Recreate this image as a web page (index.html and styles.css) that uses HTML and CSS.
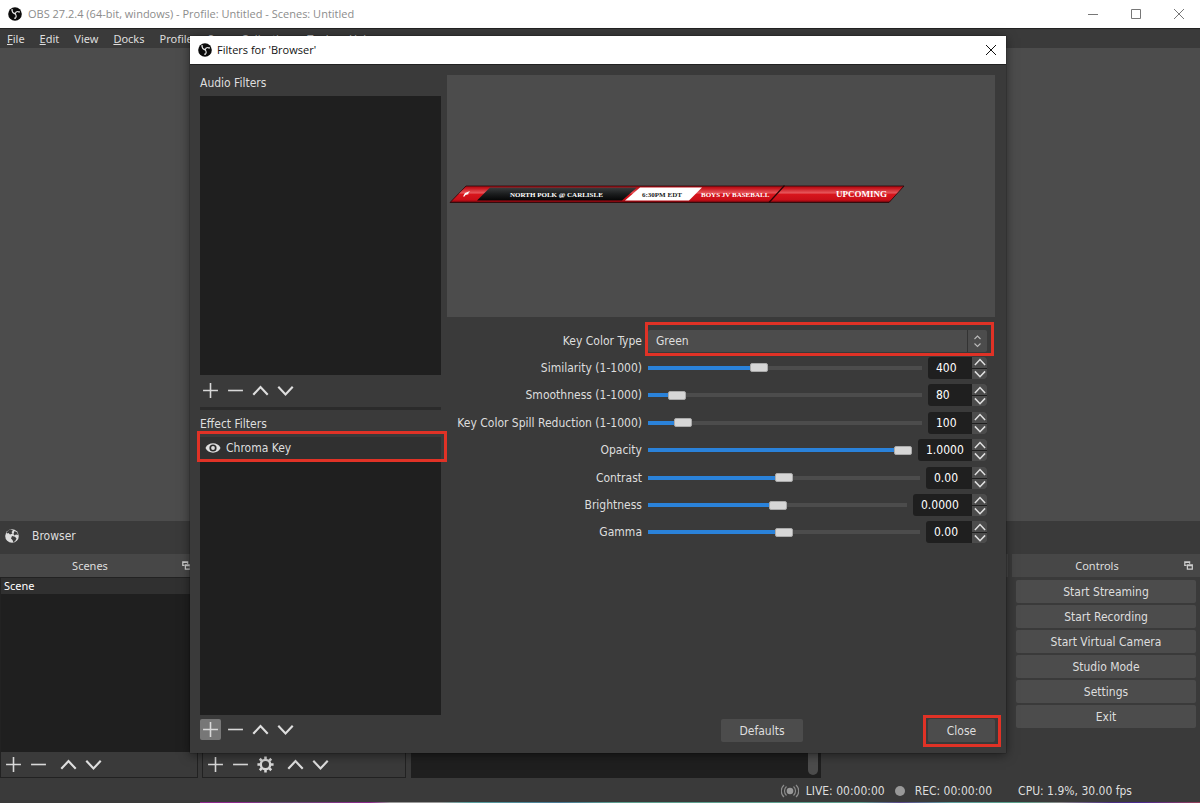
FILE: index.html
```html
<!DOCTYPE html>
<html lang="en">
<head>
<meta charset="utf-8">
<title>OBS 27.2.4 - Filters for 'Browser'</title>
<link rel="stylesheet" href="styles.css">
</head>
<body>
<svg width="0" height="0" class="defs" aria-hidden="true">
  <symbol id="obs" viewBox="0 0 16 16">
    <circle cx="8" cy="8" r="7.800" fill="#0c0c0c"/>
    <g fill="none" stroke="#e8e8e8" stroke-width="1.300" stroke-linecap="round">
      <path d="M4.800 3.200C4.600 5.400 6 7.200 8 7.600"/>
      <path d="M12.800 5.400C10.800 4.800 8.800 5.800 8 7.600"/>
      <path d="M8.200 13C9.600 11.600 9.400 9.200 8 7.600"/>
    </g>
    <g fill="#b5b5b5"><circle cx="4.600" cy="3.400" r="1"/><circle cx="12.600" cy="5.600" r="1"/><circle cx="8" cy="12.800" r="1"/></g>
  </symbol>
  <symbol id="plus" viewBox="0 0 16 16"><path d="M8 1v14M1 8h14" fill="none" stroke="#d8d8d8" stroke-width="1.500"/></symbol>
  <symbol id="minus" viewBox="0 0 16 16"><path d="M1 8h14" fill="none" stroke="#d8d8d8" stroke-width="1.500"/></symbol>
  <symbol id="up" viewBox="0 0 16 16"><path d="M1.200 12 8 4.800 14.800 12" fill="none" stroke="#dedede" stroke-width="2"/></symbol>
  <symbol id="down" viewBox="0 0 16 16"><path d="M1.200 4.500 8 11.700 14.800 4.500" fill="none" stroke="#dedede" stroke-width="2"/></symbol>
  <symbol id="gear" viewBox="0 0 16 16">
    <circle cx="8" cy="8" r="4.400" fill="none" stroke="#d8d8d8" stroke-width="2.200"/>
    <path d="M8 .4v3M8 12.600v3M.4 8h3M12.600 8h3M2.600 2.600l2.200 2.200M11.200 11.200l2.200 2.200M2.600 13.400l2.200-2.200M11.200 4.800l2.200-2.200" stroke="#d8d8d8" stroke-width="2.400"/>
  </symbol>
  <symbol id="popout" viewBox="0 0 8 8"><path d="M5 2.500V.8H.7v3h1.500M.7 1.300H5M3 3.500h4.400v3.700H3zM3 4.200h4.400" fill="none" stroke="#ccc" stroke-width="1.100"/></symbol>
  <symbol id="close" viewBox="0 0 12 12"><path d="M1 1l10 10M11 1 1 11" fill="none" stroke="currentColor"/></symbol>
</svg>

<div class="app">
  <header class="titlebar">
    <svg class="logo"><use href="#obs"/></svg>
    <span class="titlebar-text">OBS 27.2.4 (64-bit, windows) - Profile: Untitled - Scenes: Untitled</span>
    <button class="win-btn" aria-label="Minimize"><svg viewBox="0 0 12 12"><path d="M1 6.500h10" stroke="currentColor"/></svg></button>
    <button class="win-btn" aria-label="Maximize"><svg viewBox="0 0 12 12"><path d="M1.500 1.500h9v9h-9z" fill="none" stroke="currentColor"/></svg></button>
    <button class="win-btn" aria-label="Close window"><svg><use href="#close"/></svg></button>
  </header>

  <nav class="menubar">
    <a href="#"><u>F</u>ile</a><a href="#"><u>E</u>dit</a><a href="#">View</a><a href="#"><u>D</u>ocks</a><a href="#">Profile</a><a href="#">Scene Collection</a><a href="#">Tools</a><a href="#">Help</a>
  </nav>

  <main class="stage"></main>

  <div class="source-bar">
    <svg class="globe" viewBox="0 0 14 14">
      <circle cx="7" cy="7" r="6.800" fill="#dcdcdc"/>
      <path d="M5.500.5 8 1.500 6.500 3 7.500 4.500 5 5.500 3.500 4 2 4.500 1.500 3.500 3.500 1.300zM9.500 2l2.700 1.500.8 2.500-2-.5-1.500 1L8.500 5zM7 7l3 .8 1.500 1.700-1 2L8.500 13.500 7.500 11 6 9.500z" fill="#3a3a3a"/>
    </svg>
    <span>Browser</span>
  </div>

  <div class="docks">
    <section class="dock dock-scenes">
      <h2 class="dock-title">Scenes<svg class="popout"><use href="#popout"/></svg></h2>
      <div class="dock-frame">
        <ul class="dock-list"><li>Scene</li></ul>
        <div class="toolbar">
          <button class="tool" aria-label="Add scene"><svg><use href="#plus"/></svg></button>
          <button class="tool" aria-label="Remove scene"><svg><use href="#minus"/></svg></button>
          <button class="tool tool-split" aria-label="Move scene up"><svg><use href="#up"/></svg></button>
          <button class="tool" aria-label="Move scene down"><svg><use href="#down"/></svg></button>
        </div>
      </div>
    </section>
    <section class="dock dock-sources">
      <div class="dock-title"></div>
      <div class="dock-frame">
        <div class="dock-list"></div>
        <div class="toolbar">
          <button class="tool" aria-label="Add source"><svg><use href="#plus"/></svg></button>
          <button class="tool" aria-label="Remove source"><svg><use href="#minus"/></svg></button>
          <button class="tool" aria-label="Source properties"><svg><use href="#gear"/></svg></button>
          <button class="tool tool-split" aria-label="Move source up"><svg><use href="#up"/></svg></button>
          <button class="tool" aria-label="Move source down"><svg><use href="#down"/></svg></button>
        </div>
      </div>
    </section>
    <section class="dock dock-mixer">
      <div class="dock-title"></div>
      <div class="mixer"><div class="mixer-thumb"></div></div>
    </section>
    <section class="dock dock-transitions"><div class="dock-title"></div></section>
    <section class="dock dock-controls">
      <h2 class="dock-title">Controls<svg class="popout"><use href="#popout"/></svg></h2>
      <div class="controls">
        <button class="btn">Start Streaming</button>
        <button class="btn">Start Recording</button>
        <button class="btn">Start Virtual Camera</button>
        <button class="btn">Studio Mode</button>
        <button class="btn">Settings</button>
        <button class="btn">Exit</button>
      </div>
    </section>
  </div>

  <footer class="statusbar">
    <svg class="live" viewBox="0 0 18 14"><circle cx="9" cy="7" r="3.300" fill="#999"/><path d="M5.500 2.500a6 6 0 0 0 0 9M12.500 2.500a6 6 0 0 1 0 9M3 1a8 8 0 0 0 0 12M15 1a8 8 0 0 1 0 12" fill="none" stroke="#8c8c8c" stroke-width="1.200"/></svg>
    <span>LIVE: 00:00:00</span>
    <i class="rec-dot"></i>
    <span>REC: 00:00:00</span>
    <span class="cpu">CPU: 1.9%, 30.00 fps</span>
  </footer>
  <div class="edge"></div>
</div>

<div class="dialog" role="dialog" aria-labelledby="dlg-title">
  <header class="dialog-title">
    <svg class="logo"><use href="#obs"/></svg>
    <span id="dlg-title">Filters for 'Browser'</span>
    <button class="dialog-x" aria-label="Close dialog"><svg><use href="#close"/></svg></button>
  </header>
  <div class="dialog-body">
    <div class="filters">
      <h3 class="list-title">Audio Filters</h3>
      <div class="list"></div>
      <div class="toolbar list-tools">
        <button class="tool" aria-label="Add audio filter"><svg><use href="#plus"/></svg></button>
        <button class="tool" aria-label="Remove audio filter"><svg><use href="#minus"/></svg></button>
        <button class="tool" aria-label="Move audio filter up"><svg><use href="#up"/></svg></button>
        <button class="tool" aria-label="Move audio filter down"><svg><use href="#down"/></svg></button>
      </div>
      <div class="splitter"></div>
      <h3 class="list-title">Effect Filters</h3>
      <div class="list">
        <div class="list-item marked mark-item">
          <svg class="eye" viewBox="0 0 16 12"><path d="M.5 6C3-.2 13-.2 15.500 6 13 12.200 3 12.200.5 6z" fill="#dedede"/><circle cx="8" cy="6" r="3.600" fill="#2c2c2c"/><circle cx="8" cy="6" r="1.900" fill="#dedede"/></svg>
          <span>Chroma Key</span>
        </div>
      </div>
      <div class="toolbar list-tools list-tools-end">
        <button class="tool tool-active" aria-label="Add effect filter"><svg><use href="#plus"/></svg></button>
        <button class="tool" aria-label="Remove effect filter"><svg><use href="#minus"/></svg></button>
        <button class="tool" aria-label="Move effect filter up"><svg><use href="#up"/></svg></button>
        <button class="tool" aria-label="Move effect filter down"><svg><use href="#down"/></svg></button>
      </div>
    </div>

    <div class="detail">
      <div class="preview">
        <svg class="banner" viewBox="0 0 456 18">
          <defs>
            <linearGradient id="red" x2="0" y2="1"><stop offset="0" stop-color="#a30d14"/><stop offset=".12" stop-color="#c2121a"/><stop offset=".42" stop-color="#e8575b"/><stop offset=".5" stop-color="#d8151c"/><stop offset=".85" stop-color="#c80f18"/><stop offset="1" stop-color="#5c0409"/></linearGradient>
            <linearGradient id="blk" x2="0" y2="1"><stop offset="0" stop-color="#3a3d3e"/><stop offset=".5" stop-color="#1b1d1e"/><stop offset="1" stop-color="#050505"/></linearGradient>
          </defs>
          <path d="M17 1H455L440 17.500H1z" fill="url(#red)" stroke="#2a0507" stroke-width=".8"/>
          <path d="M41 2.500H188L173 15.500H28z" fill="url(#blk)"/>
          <path d="M191 2.500H253L240 15.500H176z" fill="#fff"/>
          <path d="M335.500.5 320 17.500" stroke="#2a0507" stroke-width="1.200"/>
          <path d="M14 11.500l2-3.500 5-2-2 2.500 1 .5-3.500 1-1 1.500z" fill="#fff"/>
          <g font-family="Liberation Serif, serif" font-weight="700" font-size="7">
            <text x="61" y="11.500" fill="#fff">NORTH POLK @ CARLISLE</text>
            <text x="193" y="11.500" fill="#222">6:30PM EDT</text>
            <text x="252" y="11.500" fill="#fff">BOYS JV BASEBALL</text>
            <text x="387" y="12" fill="#fff" font-size="9">UPCOMING</text>
          </g>
        </svg>
      </div>

      <form class="props">
        <label for="key">Key Color Type</label>
        <div class="select-box marked mark-select">
          <select id="key"><option>Green</option></select>
          <svg class="select-arrows" viewBox="0 0 19 22"><path d="M6.500 9 9.500 6l3 3M6.500 13.500l3 3 3-3" fill="none" stroke="#bbb" stroke-width="1.100"/></svg>
        </div>
      </form>
      <div class="detail-foot">
        <button class="btn btn-defaults">Defaults</button>
        <div class="marked mark-close"><button class="btn btn-close">Close</button></div>
      </div>
    </div>
  </div>
</div>
<script src="props.js"></script>
</body>
</html>
```

FILE: styles.css
```css
* { box-sizing: border-box; }
body {
  margin: 0;
  background: #3a3a3a;
  color: #dedede;
  font: 12px/16px "DejaVu Sans Condensed", "DejaVu Sans", sans-serif;
}
button, input, select { font: inherit; color: inherit; border: 0; padding: 0; background: none; }
h2, h3, ul { margin: 0; padding: 0; font: inherit; list-style: none; }
a { color: inherit; text-decoration: none; }
svg { display: block; }
.defs { position: absolute; }

.app { min-height: 100vh; display: flex; flex-direction: column; }

.titlebar, .dialog-title {
  display: flex;
  align-items: center;
  background: #fff;
  font: 11px/16px "Open Sans", "Noto Sans", sans-serif;
}
.titlebar { height: 28px; padding-left: 8px; color: #8c8c8c; }
.titlebar-text { flex: 1; }
.logo { width: 14px; height: 14px; margin-right: 6px; }
.win-btn { width: 43px; height: 28px; display: grid; place-items: center; color: #777; }
.win-btn svg { width: 12px; height: 12px; }

.menubar {
  height: 20px;
  display: flex;
  align-items: center;
  gap: 15px;
  padding-left: 7px;
  border-top: 1px solid #222;
  font: 11px/16px "Noto Sans", "Open Sans", sans-serif;
}
.stage { flex: 1; background: #4c4c4c; }
.source-bar { height: 33px; display: flex; align-items: center; gap: 13px; padding: 0 5px 3px; }
.globe { width: 14px; height: 14px; }

.docks { display: flex; gap: 4px; height: 224px; }
.dock { display: flex; flex-direction: column; }
.dock-scenes { flex: 0 0 198px; }
.dock-sources { flex: 0 0 204px; }
.dock-mixer { flex: 1 1 411px; }
.dock-transitions { flex: 0 1 183px; }
.dock-controls { flex: 0 0 188px; }
.dock-title {
  position: relative;
  height: 23px;
  background: #474747;
  text-align: center;
  padding-right: 18px;
  font: 11px/23px "Noto Sans", "Open Sans", sans-serif;
}
.popout { position: absolute; right: 7px; top: 7px; width: 9px; height: 9px; }
.dock-frame { flex: 1; display: flex; flex-direction: column; border: 1px solid #222; }
.dock-list { flex: 1; background: #1f1f1f; }
.dock-list li { height: 16px; background: #303030; padding-left: 3px; color: #fff; font: 11px/16px "Noto Sans", sans-serif; }
.toolbar { display: flex; align-items: center; gap: 4px; }
.dock-frame .toolbar { height: 25px; padding-left: 2px; }
.tool { width: 21px; height: 21px; display: grid; place-items: center; border-radius: 2px; }
.tool svg { width: 17px; height: 17px; }
.tool-split { margin-left: 5px; }
.tool-active { background: #777; }
.mixer { flex: 1; margin-left: 1px; padding: 0 3px 3px; background: #1f1f1f; display: flex; justify-content: flex-end; }
.mixer-thumb { width: 10px; border-radius: 5px; background: #4c4c4c; }
.controls { display: flex; flex-direction: column; gap: 2px; padding: 3px 4px; }
.btn { height: 23px; border-radius: 2px; background: #4c4c4c; text-align: center; }

.statusbar { height: 24px; display: flex; align-items: center; justify-content: flex-end; padding: 1px 68px 0 0; }
.live { width: 18px; height: 14px; margin-right: 7px; }
.rec-dot { width: 10px; height: 10px; border-radius: 50%; background: #999; margin: 0 10px; }
.cpu { margin-left: 26px; }
.edge {
  height: 1px;
  margin-left: 200px;
  background: linear-gradient(90deg, #8d2a8d 0 4%, #6b4a78 8%, #8d2a8d 17%, #999 19% 24%, #5aa0a0 27%, #4a7a96 36%, #5fa090 42% 66%, #5a4a8a 70%, #5fa0a0 75%, #5aa08a 82%, #888 86%, #4a3080 91%, #4a2a90 94%, #93405a);
}

.dialog {
  position: absolute;
  inset: 36px 194px 50px 190px;
  display: flex;
  flex-direction: column;
  background: #3a3a3a;
  box-shadow: 0 2px 10px rgba(0, 0, 0, .5), 0 0 1px #111;
}
.dialog-title { height: 29px; padding: 0 8px; color: #111; border-bottom: 1px solid #222; }
.dialog-title .logo { margin-right: 5px; }
.dialog-title span { flex: 1; }
.dialog-x { width: 13px; height: 13px; }
.dialog-x svg { width: 12px; height: 12px; }
.dialog-body { flex: 1; display: flex; gap: 6px; padding: 10px 11px 10px 10px; min-height: 0; }

.filters { flex: 0 0 241px; display: flex; flex-direction: column; }
.list-title { height: 21px; }
.splitter { height: 3px; background: #2b2b2b; margin-bottom: 6px; }
.list { flex: 1; background: #1f1f1f; }
.list-tools { height: 32px; }
.list-tools-end { height: 28px; }
.list-item { height: 22px; display: flex; align-items: center; gap: 5px; padding-left: 5px; background: #303030; }
.eye { width: 16px; height: 12px; }

.marked { position: relative; }
.marked::after { content: ""; position: absolute; border: 3px solid #e03226; pointer-events: none; }
.mark-item::after { inset: -6px -6px -3px -3px; }
.mark-select::after { inset: -8px -7px -4px -3px; }
.mark-close::after { inset: -4px -6px -5px -5px; }

.detail { flex: 1; min-width: 0; display: grid; grid-template-rows: minmax(0, 3fr) minmax(0, 5fr) auto; }
.preview { background: #4c4c4c; display: flex; align-items: center; padding: 0 0 3px 2px; }
.banner { width: calc(100% - 90px); height: auto; }
.props {
  display: grid;
  grid-template-columns: 195px minmax(0, 1fr);
  grid-auto-rows: 22px;
  height: 227px;
  align-content: space-between;
  align-items: center;
  column-gap: 6px;
  padding: 13px 8px 0 0;
}
.props label { text-align: right; white-space: nowrap; }
.select-box { height: 22px; }
select { appearance: none; width: 100%; height: 22px; padding-left: 8px; border-radius: 2px; background: #4c4c4c; }
.select-arrows { position: absolute; right: 0; top: 0; width: 20px; height: 22px; border-left: 1px solid #333; pointer-events: none; }

.field { display: flex; align-items: center; gap: 6px; }
.slider {
  appearance: none;
  flex: 1;
  min-width: 0;
  height: 10px;
  margin: 0;
  background: linear-gradient(#2a82da, #2a82da) 0 50% / var(--fill) 4px no-repeat, linear-gradient(#4c4c4c, #4c4c4c) 0 50% / 100% 4px no-repeat;
}
.slider::-webkit-slider-thumb { appearance: none; width: 18px; height: 9px; border: 1px solid #aaa; border-radius: 2px; background: #d6d6d6; }
.slider::-moz-range-thumb { width: 16px; height: 7px; border: 1px solid #aaa; border-radius: 2px; background: #d6d6d6; }
.spin { display: flex; height: 22px; border-radius: 3px; background: #1f1f1f; overflow: hidden; }
.spin-value { width: 44px; padding-left: 8px; color: #fff; }
.w2 .spin-value { width: 46px; }
.w3 .spin-value { width: 54px; }
.w4 .spin-value { width: 59px; }
.spin-btns { display: grid; grid-template-rows: 11px 10px; gap: 1px; width: 15px; }
.spin-btns button { display: flex; align-items: center; justify-content: center; min-height: 0; background: #4c4c4c; }
.spin-btns svg { flex: none; width: 12px; height: 12px; margin: -2px 0; }

.detail-foot { display: flex; justify-content: space-between; padding: 0 0 1px 274px; }
.btn-defaults { width: 82px; }
.btn-close { width: 67px; }
```

FILE: props.js
```js
const rows = [
  ['Similarity (1-1000)', '400', 40, 'w1'],
  ['Smoothness (1-1000)', '80', 8, 'w1'],
  ['Key Color Spill Reduction (1-1000)', '100', 10, 'w1'],
  ['Opacity', '1.0000', 100, 'w3'],
  ['Contrast', '0.00', 50, 'w2'],
  ['Brightness', '0.0000', 50, 'w4'],
  ['Gamma', '0.00', 50, 'w2'],
];
const arrow = (id) => `<svg><use href="#${id}"/></svg>`;
document.querySelector('.props').insertAdjacentHTML('beforeend', rows.map(([name, value, pct, w], i) => `
  <label for="v${i}">${name}</label>
  <div class="field ${w}">
    <input class="slider" type="range" min="0" max="100" value="${pct}" aria-label="${name}" style="--fill:${pct}%">
    <div class="spin">
      <input class="spin-value" id="v${i}" type="text" value="${value}">
      <span class="spin-btns">
        <button type="button" aria-label="Increase ${name}">${arrow('up')}</button>
        <button type="button" aria-label="Decrease ${name}">${arrow('down')}</button>
      </span>
    </div>
  </div>`).join(''));
```
